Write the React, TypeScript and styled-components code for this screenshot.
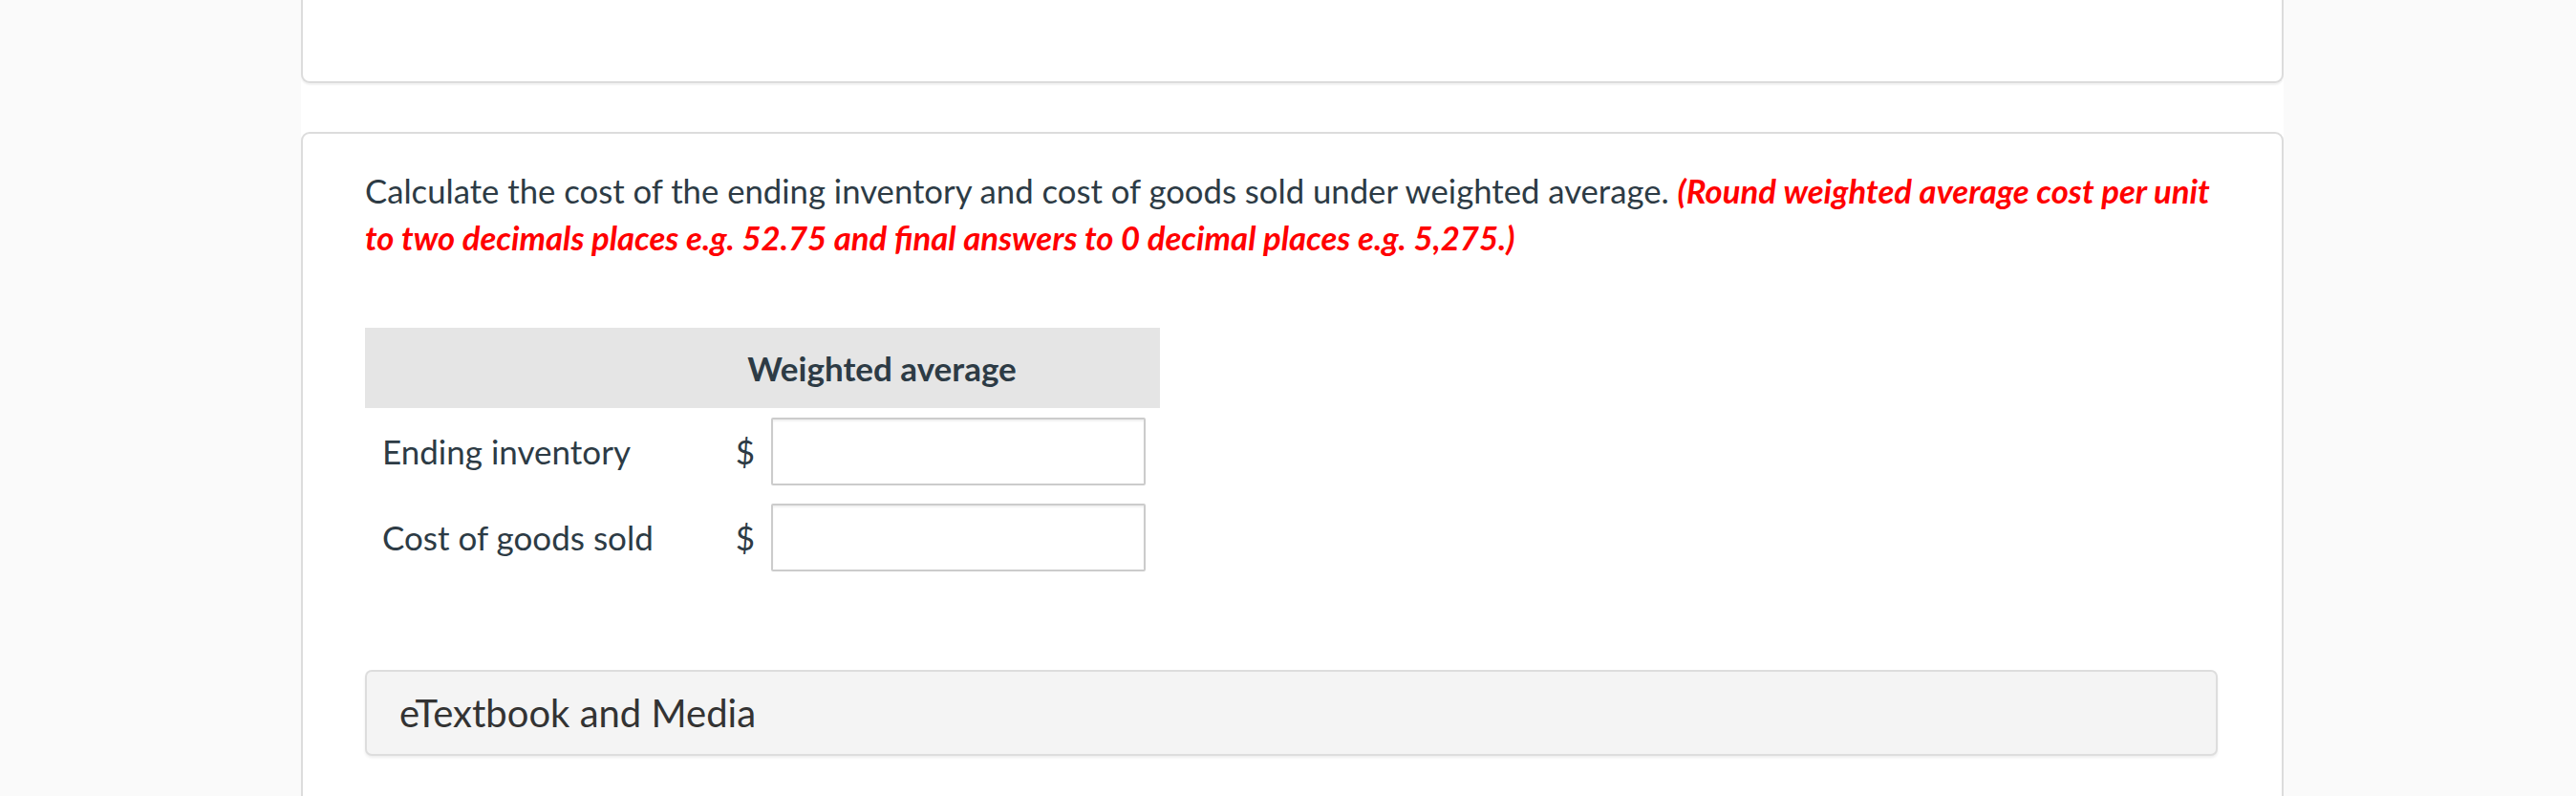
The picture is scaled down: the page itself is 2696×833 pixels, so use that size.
import React from "react";
import styled, { createGlobalStyle } from "styled-components";

const GlobalStyle = createGlobalStyle`
  html, body { margin: 0; padding: 0; }
  body {
    background: #fafafa;
    font-family: Lato, "Open Sans", "Liberation Sans", sans-serif;
    color: #2d3b45;
  }
  * { box-sizing: border-box; }
`;

const Column = styled.main`
  margin-left: 315px;
  width: 2075px;
  height: 833px;
  background: #ffffff;
  display: flex;
  flex-direction: column;
  gap: 51px;
  overflow: hidden;
`;

const TopCard = styled.section`
  height: 87px;
  flex-shrink: 0;
  border: 2px solid #dcdcdc;
  border-top: none;
  border-radius: 0 0 9px 9px;
  box-shadow: 0 2px 2px rgba(0, 0, 0, 0.06);
  background: #fff;
`;

const QuestionCard = styled.section`
  flex-shrink: 0;
  border: 2px solid #dcdcdc;
  border-radius: 9px;
  padding: 35px 67px 60px 65px;
  background: #fff;
`;

const Prompt = styled.p`
  margin: 0 -10px 0 0;
  font-size: 34.7px;
  line-height: 49px;
  color: #2d3b45;
`;

const Note = styled.span`
  color: #ff0000;
  font-style: italic;
  font-weight: 700;
`;

const Table = styled.table`
  margin-top: 70px;
  border-collapse: collapse;
  table-layout: fixed;
  width: 832px;
`;

const HeadRow = styled.tr`
  background: #e5e5e5;
  height: 84px;
`;

const HeadCell = styled.th<{ $w?: number; $shift?: number }>`
  width: ${(p) => (p.$w ? `${p.$w}px` : "auto")};
  padding: 0 ${(p) => p.$shift ?? 0}px 0 0;
  font-size: 35px;
  font-weight: 700;
  text-align: center;
  color: #2d3b45;
`;

const Row = styled.tr`
  height: 90px;
`;

const LabelCell = styled.td`
  padding: 0 0 0 18px;
  font-size: 35px;
  color: #2d3b45;
  white-space: nowrap;
`;

const ValueCell = styled.td`
  padding: 0 15px 0 0;
`;

const ValueWrap = styled.div`
  display: flex;
  align-items: center;
  justify-content: flex-end;
  gap: 17px;
`;

const Dollar = styled.span`
  font-size: 35px;
  color: #2d3b45;
`;

const AnswerInput = styled.input`
  width: 392px;
  height: 71px;
  border: 2px solid #cccccc;
  border-radius: 2px;
  box-shadow: inset 0 2px 2px rgba(0, 0, 0, 0.06);
  background: #fff;
  font-size: 30px;
  font-family: inherit;
  padding: 0 12px;
  outline: none;
`;

const MediaBar = styled.div`
  margin-top: 94px;
  height: 90px;
  border: 2px solid #dddddd;
  border-radius: 7px;
  background: #f4f4f4;
  box-shadow: 0 2px 3px rgba(0, 0, 0, 0.07);
  display: flex;
  align-items: center;
  padding-left: 34px;
  font-size: 40px;
  color: #333333;
`;

const rows = ["Ending inventory", "Cost of goods sold"];

export default function App() {
  return (
    <>
      <GlobalStyle />
      <Column>
        <TopCard />
        <QuestionCard>
          <Prompt>
            Calculate the cost of the ending inventory and cost of goods sold under weighted average.{" "}
            <Note>
              (Round weighted average cost per unit to two decimals places e.g. 52.75 and final answers to 0 decimal
              places e.g. 5,275.)
            </Note>
          </Prompt>
          <Table>
            <thead>
              <HeadRow>
                <HeadCell $w={300} />
                <HeadCell $shift={50}>Weighted average</HeadCell>
              </HeadRow>
            </thead>
            <tbody>
              {rows.map((r) => (
                <Row key={r}>
                  <LabelCell>{r}</LabelCell>
                  <ValueCell>
                    <ValueWrap>
                      <Dollar>$</Dollar>
                      <AnswerInput type="text" aria-label={r} />
                    </ValueWrap>
                  </ValueCell>
                </Row>
              ))}
            </tbody>
          </Table>
          <MediaBar>eTextbook and Media</MediaBar>
        </QuestionCard>
      </Column>
    </>
  );
}
